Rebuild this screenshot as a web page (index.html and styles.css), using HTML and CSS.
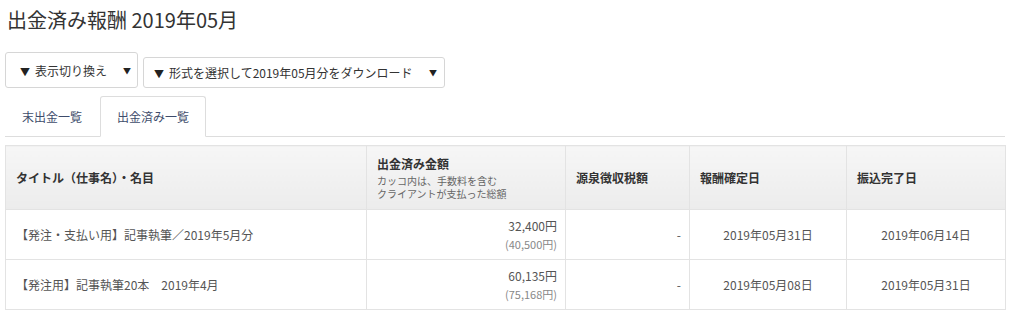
FILE: index.html
```html
<!DOCTYPE html>
<html lang="ja">
<head>
  <meta charset="UTF-8">
  <title>出金済み報酬</title>
  <link rel="stylesheet" href="styles.css">
</head>
<body>
  <div class="page">
    <h1 class="page-title">出金済み報酬 2019年05月</h1>

    <div class="toolbar">
      <div class="dropdown dropdown-view">
        <span class="dropdown-label"><span class="arrow">▼</span>表示切り換え</span>
        <span class="caret">▼</span>
      </div>
      <div class="dropdown dropdown-download">
        <span class="dropdown-label"><span class="arrow">▼</span>形式を選択して2019年05月分をダウンロード</span>
        <span class="caret">▼</span>
      </div>
    </div>

    <ul class="tabs">
      <li class="tab">末出金一覧</li>
      <li class="tab active">出金済み一覧</li>
    </ul>

    <table class="payouts">
      <colgroup>
        <col class="col-title">
        <col class="col-amount">
        <col class="col-tax">
        <col class="col-fixed">
        <col class="col-paid">
      </colgroup>
      <thead>
        <tr>
          <th>タイトル（仕事名）・名目</th>
          <th>
            出金済み金額
            <span class="th-note">カッコ内は、手数料を含む<br>クライアントが支払った総額</span>
          </th>
          <th>源泉徴収税額</th>
          <th>報酬確定日</th>
          <th>振込完了日</th>
        </tr>
      </thead>
      <tbody>
        <tr>
          <td>【発注・支払い用】記事執筆／2019年5月分</td>
          <td class="num">32,400円<span class="gross">(40,500円)</span></td>
          <td class="num">-</td>
          <td class="date">2019年05月31日</td>
          <td class="date">2019年06月14日</td>
        </tr>
        <tr>
          <td>【発注用】記事執筆20本　2019年4月</td>
          <td class="num">60,135円<span class="gross">(75,168円)</span></td>
          <td class="num">-</td>
          <td class="date">2019年05月08日</td>
          <td class="date">2019年05月31日</td>
        </tr>
      </tbody>
    </table>
  </div>
</body>
</html>
```

FILE: styles.css
```css
/* Base */
body {
  margin: 0;
  padding: 0;
  background: #fff;
  color: #333;
  font-family: "Noto Sans CJK JP", "Noto Sans", sans-serif;
  font-size: 12px;
}
.page {
  width: 1000px;
  padding: 0 5px;
}
/* Heading */
.page-title {
  margin: 0;
  padding: 4px 2px 0;
  height: 48px;
  font-size: 20px;
  font-weight: 400;
  line-height: 32px;
  color: #333;
}
/* Dropdown buttons */
.toolbar {
  display: flex;
  align-items: flex-end;
  gap: 5px;
}
.dropdown {
  display: flex;
  align-items: center;
  justify-content: space-between;
  box-sizing: border-box;
  border: 1px solid #d6d6d6;
  border-radius: 3px;
  background: #fff;
  color: #333;
  font-size: 12px;
}
.dropdown-view {
  width: 133px;
  height: 36px;
  padding: 0 6px 0 14px;
}
.dropdown-download {
  width: 302px;
  height: 31px;
  padding: 0 7px 0 10px;
}
.arrow {
  font-size: 10px;
  margin-right: 5px;
  color: #222;
}
.caret {
  font-size: 8px;
  color: #222;
}
/* Tabs */
.tabs {
  display: flex;
  margin: 8px 0 0;
  padding: 0;
  list-style: none;
  border-bottom: 1px solid #ddd;
}
.tab {
  box-sizing: border-box;
  height: 40px;
  line-height: 40px;
  padding: 0 16px;
  margin-right: 1px;
  margin-bottom: -1px;
  color: #3e4c6b;
  border: 1px solid transparent;
  border-radius: 3px 3px 0 0;
}
.tab.active {
  background: #fff;
  border-color: #ddd;
  border-bottom-color: #fff;
  height: 41px;
}
/* Table */
.payouts {
  width: 1000px;
  margin-top: 8px;
  border-collapse: collapse;
  table-layout: fixed;
}
.col-title { width: 361px; }
.col-amount { width: 199px; }
.col-tax { width: 124px; }
.col-fixed { width: 157px; }
.col-paid { width: 159px; }
.payouts th,
.payouts td {
  border: 1px solid #e3e3e3;
  padding: 0 10px;
  vertical-align: middle;
}
.payouts th {
  height: 63px;
  text-align: left;
  font-weight: 700;
  color: #333;
  background: linear-gradient(#f6f6f6, #ececec);
}
.th-note {
  display: block;
  margin-top: 2px;
  font-size: 10px;
  font-weight: 400;
  line-height: 13px;
  color: #666;
}
.payouts td {
  height: 49px;
  color: #555;
  line-height: 19px;
}
.payouts td.num {
  text-align: right;
  padding-right: 8px;
}
.payouts td.date {
  text-align: center;
}
.gross {
  display: block;
  font-size: 11px;
  color: #888;
}
```
